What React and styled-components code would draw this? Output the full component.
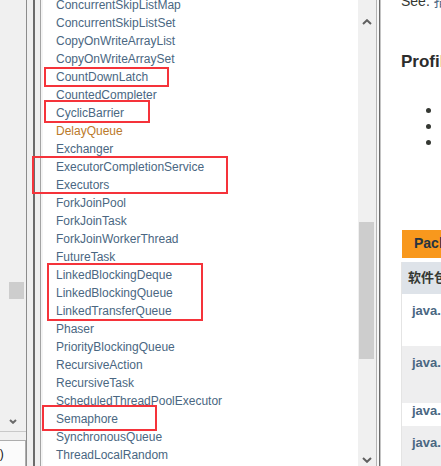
import React from 'react';
import styled, { createGlobalStyle } from 'styled-components';

const GlobalStyle = createGlobalStyle`
  body {
    margin: 0;
    background: #fff;
    font-family: 'Liberation Sans', Arial, sans-serif;
  }
  #root {
    width: 441px;
    height: 466px;
  }
`;

const classes = [
  'ConcurrentSkipListMap',
  'ConcurrentSkipListSet',
  'CopyOnWriteArrayList',
  'CopyOnWriteArraySet',
  'CountDownLatch',
  'CountedCompleter',
  'CyclicBarrier',
  'DelayQueue',
  'Exchanger',
  'ExecutorCompletionService',
  'Executors',
  'ForkJoinPool',
  'ForkJoinTask',
  'ForkJoinWorkerThread',
  'FutureTask',
  'LinkedBlockingDeque',
  'LinkedBlockingQueue',
  'LinkedTransferQueue',
  'Phaser',
  'PriorityBlockingQueue',
  'RecursiveAction',
  'RecursiveTask',
  'ScheduledThreadPoolExecutor',
  'Semaphore',
  'SynchronousQueue',
  'ThreadLocalRandom',
];

// red annotation frames drawn over the class list
const marks = [
  { x: 44, y: 67, w: 125, h: 20 },
  { x: 44, y: 100, w: 106, h: 23 },
  { x: 32, y: 156, w: 196, h: 38 },
  { x: 47, y: 263, w: 156, h: 58 },
  { x: 42, y: 405, w: 115, h: 26 },
];

const rows = [
  { bg: '#fff', h: 52, pad: 9 },
  { bg: '#eeeeef', h: 57, pad: 9 },
  { bg: '#fff', h: 23, pad: 0 },
  { bg: '#eeeeef', h: 40, pad: 9 },
];

const Screen = styled.div`
  position: relative;
  display: flex;
  width: 441px;
  height: 466px;
  overflow: hidden;
  background: #fff;
`;

const LeftPane = styled.div`
  width: 26px;
  flex: none;
  display: flex;
  flex-direction: column;
  background: #f0f0f0;
`;

const LeftTrack = styled.div`
  height: 431px;
  flex: none;
  display: flex;
  flex-direction: column;
`;

const Thumb = styled.div`
  flex: none;
  width: ${(p) => p.$w}px;
  height: ${(p) => p.$h}px;
  margin-top: ${(p) => p.$top}px;
  margin-left: ${(p) => p.$left}px;
  background: #cdcdcd;
`;

const ArrowBox = styled.div`
  flex: none;
  height: ${(p) => p.$h}px;
  display: flex;
  align-items: center;
  justify-content: center;
  margin-top: ${(p) => (p.$end ? 'auto' : '0')};
`;

const HLine = styled.div`
  height: 1px;
  background: #c9c9c9;
  flex: none;
`;

const Spacer = styled.div`
  height: ${(p) => p.$h}px;
  flex: none;
`;

const MiniButton = styled.div`
  flex: 1;
  overflow: hidden;
  white-space: nowrap;
  background: #fbfbfb;
  border-top: 1px solid #adadad;
  border-right: 1px solid #adadad;
  font-size: 12px;
  line-height: 14px;
  color: #111;
  padding-top: 6px;

  span {
    margin-left: -7px;
  }
`;

const Edge = styled.div`
  display: flex;
  flex: none;
  height: 100%;
`;

const Rule = styled.div`
  width: ${(p) => p.$w}px;
  background: ${(p) => p.$c};
  flex: none;
`;

const ListFrame = styled.div`
  width: 315px;
  flex: none;
  background: #fff;
  overflow: hidden;
`;

const ClassList = styled.ul`
  list-style: none;
  margin: -4px 0 0;
  padding: 0 0 0 13px;
`;

const ClassItem = styled.li`
  font-size: 12px;
  line-height: 18px;
  white-space: nowrap;
  color: ${(p) => (p.$hover ? '#bb7a2a' : '#4a6782')};
`;

const ScrollBar = styled.div`
  width: 18px;
  flex: none;
  display: flex;
  flex-direction: column;
  background: #f0f0f0;
`;

const RightFrame = styled.div`
  flex: 1;
  min-width: 0;
  overflow: hidden;
  padding-left: 20px;
  color: #353833;
`;

const SeeLine = styled.div`
  font-size: 14px;
  line-height: 17px;
  margin-top: -7px;
  white-space: nowrap;

  a {
    color: #4a6782;
    font-family: 'Liberation Sans', 'Noto Sans CJK SC', sans-serif;
    text-decoration: none;
  }
`;

const Heading = styled.h3`
  margin: 42px 0 0;
  font-size: 17px;
  line-height: 20px;
  font-weight: bold;
  white-space: nowrap;
  color: #2c2c2c;
`;

const Bullets = styled.ul`
  list-style: none;
  margin: 30px 0 0;
  padding: 0 0 0 25px;
`;

const Bullet = styled.li`
  height: 16px;
  display: flex;
  align-items: center;

  &::before {
    content: '';
    width: 5px;
    height: 5px;
    border-radius: 50%;
    background: #353833;
  }
`;

const Caption = styled.div`
  margin: 80px 0 0 1px;
  height: 28px;
  box-sizing: border-box;
  padding: 5px 12px 0;
  background: #f8981d;
  color: #253441;
  font-size: 14px;
  line-height: 16px;
  font-weight: bold;
  white-space: nowrap;
`;

const Table = styled.div`
  margin-top: 4px;
  border-left: 1px solid #e4e4e4;
`;

const HeadRow = styled.div`
  height: 32px;
  box-sizing: border-box;
  padding: 8px 0 0 6px;
  background: #dee3e9;
  font-family: 'Liberation Sans', 'Noto Sans CJK SC', sans-serif;
  font-size: 13px;
  line-height: 15px;
  font-weight: bold;
  white-space: nowrap;
`;

const Row = styled.div`
  height: ${(p) => p.$h}px;
  box-sizing: border-box;
  padding: ${(p) => p.$pad}px 0 0 10px;
  background: ${(p) => p.$bg};
  color: #4a6782;
  font-size: 13px;
  line-height: 15px;
  font-weight: bold;
  white-space: nowrap;
`;

const Mark = styled.div`
  position: absolute;
  left: ${(p) => p.$x}px;
  top: ${(p) => p.$y}px;
  width: ${(p) => p.$w}px;
  height: ${(p) => p.$h}px;
  box-sizing: border-box;
  border: 2px solid #f5333a;
  pointer-events: none;
`;

const Chevron = ({ down, w = 10, h = 6, color = '#606060' }) => (
  <svg width={w} height={h} viewBox={`0 0 ${w} ${h}`}>
    <polyline
      points={
        down
          ? `1,1 ${w / 2},${h - 1.2} ${w - 1},1`
          : `1,${h - 1} ${w / 2},1.2 ${w - 1},${h - 1}`
      }
      fill="none"
      stroke={color}
      strokeWidth="2"
    />
  </svg>
);

const App = () => (
  <>
    <GlobalStyle />
    <Screen>
      <LeftPane>
        <LeftTrack>
          <Thumb $w={15} $h={17} $top={282} $left={9} />
          <ArrowBox $h={20} $end>
            <Chevron down w={8} h={5} color="#6a6a6a" />
          </ArrowBox>
        </LeftTrack>
        <HLine />
        <Spacer $h={8} />
        <MiniButton>
          <span>0)</span>
        </MiniButton>
      </LeftPane>

      <Edge>
        <Rule $w={1} $c="#8c8c8c" />
        <Rule $w={6} $c="#f0f0f0" />
        <Rule $w={2} $c="#6b6b6b" />
        <Rule $w={5} $c="#f0f0f0" />
        <Rule $w={1} $c="#a3a3a3" />
        <Rule $w={2} $c="#f4f4f4" />
      </Edge>

      <ListFrame>
        <ClassList>
          {classes.map((name) => (
            <ClassItem key={name} $hover={name === 'DelayQueue'}>
              {name}
            </ClassItem>
          ))}
        </ClassList>
      </ListFrame>

      <ScrollBar>
        <ArrowBox $h={44}>
          <Chevron />
        </ArrowBox>
        <Thumb $w={15} $h={137} $top={178} $left={1} />
        <ArrowBox $h={12} $end>
          <Chevron down />
        </ArrowBox>
      </ScrollBar>

      <Edge>
        <Rule $w={1} $c="#b4b4b4" />
        <Rule $w={2} $c="#f7f7f7" />
        <Rule $w={1} $c="#6a6a6a" />
        <Rule $w={1} $c="#c4c4c4" />
      </Edge>

      <RightFrame>
        <SeeLine>
          See. <a href="#">指南</a>
        </SeeLine>
        <Heading>Profiles</Heading>
        <Bullets>
          <Bullet />
          <Bullet />
          <Bullet />
        </Bullets>
        <Caption>Packages</Caption>
        <Table>
          <HeadRow>软件包</HeadRow>
          {rows.map((r, i) => (
            <Row key={i} $bg={r.bg} $h={r.h} $pad={r.pad}>
              java.util
            </Row>
          ))}
        </Table>
      </RightFrame>

      {marks.map((m, i) => (
        <Mark key={i} $x={m.x} $y={m.y} $w={m.w} $h={m.h} />
      ))}
    </Screen>
  </>
);

export default App;
